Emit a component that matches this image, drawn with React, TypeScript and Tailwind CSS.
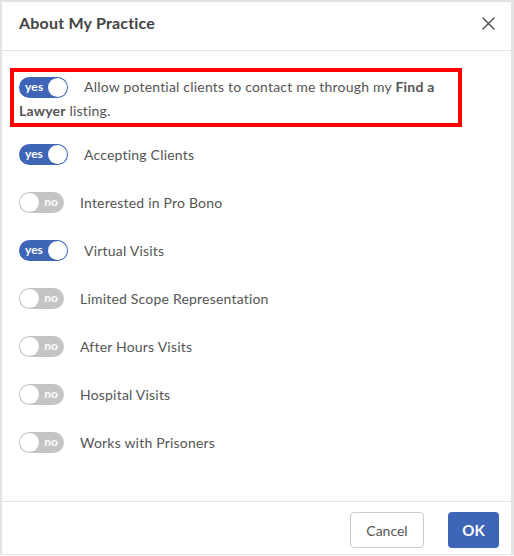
import React from "react";

function Toggle({ on }: { on: boolean }) {
  if (on) {
    return (
      <span className="inline-flex items-center justify-between w-[49px] h-[21px] rounded-full bg-[#3e65b7] pl-[6px] pr-[1px] align-middle shrink-0">
        <span className="text-white text-[12px] font-bold leading-none">yes</span>
        <span className="w-[19px] h-[19px] rounded-full bg-white" />
      </span>
    );
  }
  return (
    <span className="inline-flex items-center justify-between w-[45px] h-[21px] rounded-full bg-[#c4c4c4] pl-[1px] pr-[6px] align-middle shrink-0">
      <span className="w-[19px] h-[19px] rounded-full bg-white" />
      <span className="text-white text-[12px] font-bold leading-none">no</span>
    </span>
  );
}

const rows: { label: string; on: boolean }[] = [
  { label: "Accepting Clients", on: true },
  { label: "Interested in Pro Bono", on: false },
  { label: "Virtual Visits", on: true },
  { label: "Limited Scope Representation", on: false },
  { label: "After Hours Visits", on: false },
  { label: "Hospital Visits", on: false },
  { label: "Works with Prisoners", on: false },
];

export default function App() {
  return (
    <div
      className="w-[514px] h-[556px] bg-white"
      style={{ fontFamily: "Lato, 'Noto Sans', sans-serif" }}
    >
      <div className="w-[514px] h-[555px] flex flex-col border-t-2 border-l-2 border-r-[3px] border-b border-[#e3e3e3] bg-white">
        {/* Header */}
        <div className="h-[49px] shrink-0 flex items-center justify-between pl-[17px] pr-[16px] pb-[6px] border-b border-[#e3e3e3]">
          <h1 className="text-[16px] font-bold text-[#444444] tracking-[0.2px]">About My Practice</h1>
          <svg width="13" height="13" viewBox="0 0 13 13" className="text-[#555555]">
            <path d="M1 1 L12 12 M12 1 L1 12" stroke="currentColor" strokeWidth="1.5" strokeLinecap="round" />
          </svg>
        </div>

        {/* Body */}
        <div className="flex-1 flex flex-col pl-[8px] pt-[17px]">
          <div className="w-[452px] border-4 border-[#ff0000] pl-[5px] pt-[3px] pr-[4px] text-[14px] leading-[24px] text-[#555555] tracking-[0.2px]">
            <div className="h-[24px] flex items-center gap-[16px]">
              <Toggle on={true} />
              <span>
                Allow potential clients to contact me through my <b className="font-bold">Find a</b>
              </span>
            </div>
            <div className="h-[24px]">
              <b className="font-bold">Lawyer</b> listing.
            </div>
          </div>
          <div className="mt-[3px] flex flex-col pl-[9px]">
            {rows.map((r) => (
              <div key={r.label} className="h-[48px] flex items-center gap-[16px]">
                <Toggle on={r.on} />
                <span className="text-[14px] text-[#555555] tracking-[0.2px]">{r.label}</span>
              </div>
            ))}
          </div>
        </div>

        {/* Footer */}
        <div className="h-[53px] shrink-0 border-t border-[#e3e3e3] flex items-start justify-end gap-[24px] pr-[12px] pt-[10px]">
          <button className="w-[74px] h-[36px] rounded-[4px] border border-[#cccccc] bg-white text-[14px] text-[#555555]">
            Cancel
          </button>
          <button className="w-[51px] h-[36px] rounded-[4px] bg-[#3e65b7] text-[15px] font-bold text-white">
            OK
          </button>
        </div>
      </div>
    </div>
  );
}
